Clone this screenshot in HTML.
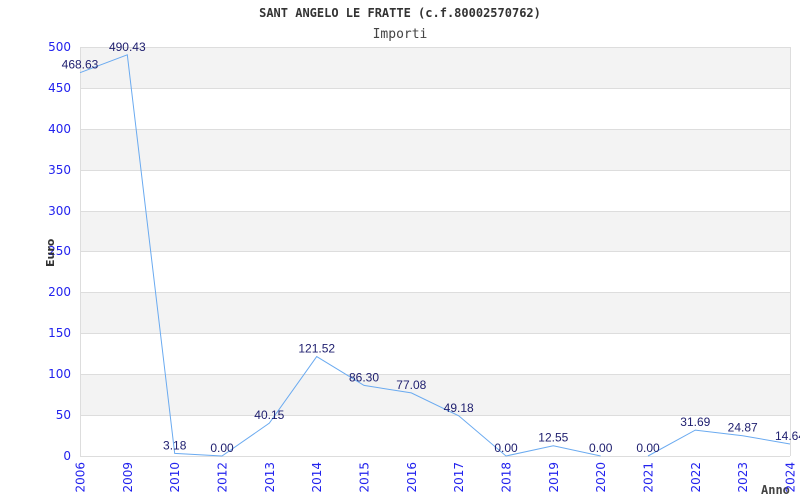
<!DOCTYPE html>
<html><head><meta charset="utf-8"><style>
html,body{margin:0;padding:0;background:#fff;width:800px;height:500px;overflow:hidden}
svg{display:block}
.y{font-family:"DejaVu Sans",sans-serif;font-size:12px;fill:#2222ee;text-anchor:end}
.x{font-family:"DejaVu Sans",sans-serif;font-size:12px;fill:#2222ee;text-anchor:end}
.d{font-family:"Liberation Sans",Arial,sans-serif;font-size:12px;fill:#202070;text-anchor:middle}
</style></head><body>
<svg width="800" height="500" xmlns="http://www.w3.org/2000/svg">
<text x="400" y="17" text-anchor="middle" font-family="DejaVu Sans Mono, monospace" font-weight="bold" font-size="12" fill="#333">SANT ANGELO LE FRATTE (c.f.80002570762)</text>
<text x="400" y="38" text-anchor="middle" font-family="DejaVu Sans Mono, monospace" font-size="13" fill="#444">Importi</text>
<g fill="#f3f3f3">
<rect x="80" y="47" width="710" height="41"/>
<rect x="80" y="129" width="710" height="41"/>
<rect x="80" y="211" width="710" height="41"/>
<rect x="80" y="292" width="710" height="41"/>
<rect x="80" y="374" width="710" height="41"/>
</g>
<g stroke="#dddddd" stroke-width="1">
<line x1="80" y1="47.5" x2="790" y2="47.5"/>
<line x1="80" y1="88.5" x2="790" y2="88.5"/>
<line x1="80" y1="129.5" x2="790" y2="129.5"/>
<line x1="80" y1="170.5" x2="790" y2="170.5"/>
<line x1="80" y1="211.5" x2="790" y2="211.5"/>
<line x1="80" y1="251.5" x2="790" y2="251.5"/>
<line x1="80" y1="292.5" x2="790" y2="292.5"/>
<line x1="80" y1="333.5" x2="790" y2="333.5"/>
<line x1="80" y1="374.5" x2="790" y2="374.5"/>
<line x1="80" y1="415.5" x2="790" y2="415.5"/>
<line x1="80" y1="456.5" x2="790" y2="456.5"/>
<line x1="80.5" y1="47" x2="80.5" y2="456"/>
<line x1="790.5" y1="47" x2="790.5" y2="456"/>
</g>
<g class="y">
<text x="71" y="51">500</text><text x="71" y="92">450</text><text x="71" y="133">400</text>
<text x="71" y="174">350</text><text x="71" y="215">300</text><text x="71" y="255">250</text>
<text x="71" y="296">200</text><text x="71" y="337">150</text><text x="71" y="378">100</text>
<text x="71" y="419">50</text><text x="71" y="460">0</text>
</g>
<text transform="translate(54,267) rotate(-90)" font-family="DejaVu Sans, sans-serif" font-weight="bold" font-size="11" fill="#333">Euro</text>
<text x="761" y="494" font-family="DejaVu Sans Mono, monospace" font-weight="bold" font-size="12" fill="#444">Anno</text>
<polyline fill="none" stroke="#6aaaf0" stroke-width="1" points="80,72.7 127.3,54.8 174.7,453.4 222,456 269.3,423.2 316.7,356.6 364,385.4 411.3,392.9 458.7,415.8 506,456 553.3,445.7 600.7,456"/>
<polyline fill="none" stroke="#6aaaf0" stroke-width="1" points="648,456 695.3,430.1 742.7,435.7 790,444"/>
<g class="d">
<text x="80" y="68.7">468.63</text><text x="127.3" y="50.8">490.43</text><text x="174.7" y="449.4">3.18</text>
<text x="222" y="452">0.00</text><text x="269.3" y="419.2">40.15</text><text x="316.7" y="352.6">121.52</text>
<text x="364" y="381.4">86.30</text><text x="411.3" y="388.9">77.08</text><text x="458.7" y="411.8">49.18</text>
<text x="506" y="452">0.00</text><text x="553.3" y="441.7">12.55</text><text x="600.7" y="452">0.00</text>
<text x="648" y="452">0.00</text><text x="695.3" y="426.1">31.69</text><text x="742.7" y="431.7">24.87</text>
<text x="790" y="440">14.64</text>
</g>
<g class="x">
<text transform="translate(84.5,462) rotate(-90)">2006</text>
<text transform="translate(131.8,462) rotate(-90)">2009</text>
<text transform="translate(179.2,462) rotate(-90)">2010</text>
<text transform="translate(226.5,462) rotate(-90)">2012</text>
<text transform="translate(273.8,462) rotate(-90)">2013</text>
<text transform="translate(321.2,462) rotate(-90)">2014</text>
<text transform="translate(368.5,462) rotate(-90)">2015</text>
<text transform="translate(415.8,462) rotate(-90)">2016</text>
<text transform="translate(463.2,462) rotate(-90)">2017</text>
<text transform="translate(510.5,462) rotate(-90)">2018</text>
<text transform="translate(557.8,462) rotate(-90)">2019</text>
<text transform="translate(605.2,462) rotate(-90)">2020</text>
<text transform="translate(652.5,462) rotate(-90)">2021</text>
<text transform="translate(699.8,462) rotate(-90)">2022</text>
<text transform="translate(747.2,462) rotate(-90)">2023</text>
<text transform="translate(794.5,462) rotate(-90)">2024</text>
</g>
</svg>
</body></html>
